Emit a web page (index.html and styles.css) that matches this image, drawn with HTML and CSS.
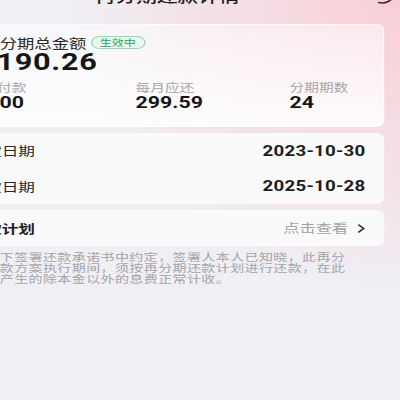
FILE: index.html
```html
<!DOCTYPE html>
<html lang="zh-CN">
<head>
<meta charset="utf-8">
<title>再分期详情</title>
<link rel="stylesheet" href="styles.css">
</head>
<body>
<div class="screen">
  <div class="header">
    <span class="title">再分期还款详情</span>
    <svg class="header-icon" width="12" height="14" viewBox="0 0 12 14"><path d="M1 12.5 Q7 14.2 10.5 9" fill="none" stroke="#333" stroke-width="1.5" stroke-linecap="round"/></svg>
  </div>

  <div class="card summary">
    <div class="summary-head">
      <span class="summary-label">再分期总金额</span>
      <span class="badge">生效中</span>
    </div>
    <div class="amount">7190.26</div>
    <div class="stats">
      <div class="stat">
        <div class="stat-label">首付款</div>
        <div class="stat-value">0.00</div>
      </div>
      <div class="stat">
        <div class="stat-label">每月应还</div>
        <div class="stat-value">299.59</div>
      </div>
      <div class="stat">
        <div class="stat-label">分期期数</div>
        <div class="stat-value">24</div>
      </div>
    </div>
  </div>

  <div class="card dates">
    <div class="row">
      <span class="row-label">还款日期</span>
      <span class="row-value">2023-10-30</span>
    </div>
    <div class="row">
      <span class="row-label">到款日期</span>
      <span class="row-value">2025-10-28</span>
    </div>
  </div>

  <div class="card plan">
    <span class="plan-label">还款计划</span>
    <span class="plan-link">点击查看
      <svg class="chev" width="6" height="9" viewBox="0 0 6 9"><path d="M1 1 L4.6 4.5 L1 8" fill="none" stroke="#333" stroke-width="1.5" stroke-linecap="round" stroke-linejoin="round"/></svg>
    </span>
  </div>

  <p class="notice">在以下签署还款承诺书中约定，签署人本人已知晓，此再分<br>期还款方案执行期间，须按再分期还款计划进行还款，在此<br>期间产生的除本金以外的息费正常计收。</p>
</div>
</body>
</html>
```

FILE: styles.css
```css
html, body {
  margin: 0;
  padding: 0;
}
body {
  width: 400px;
  height: 400px;
  overflow: hidden;
  font-family: "Noto Sans CJK SC", "Noto Sans", sans-serif;
  background:
    radial-gradient(ellipse 330px 290px at 400px 0px, rgba(250, 204, 212, 0.95), rgba(250, 204, 212, 0) 100%),
    #f0eff4;
}
.screen {
  width: 337px;
  margin-left: -49px;
  transform: scaleX(1.333);
  transform-origin: 0 0;
}
.header {
  height: 24px;
  margin-top: -17.5px;
  display: flex;
  align-items: flex-start;
}
.title {
  margin-left: 108px;
  font-size: 15.5px;
  line-height: 24px;
  font-weight: 500;
  color: #1c1c1c;
  white-space: nowrap;
}
.header-icon {
  margin-left: auto;
  margin-right: 5px;
  margin-top: 7.5px;
}
.card {
  margin: 0 12px;
  border-radius: 6px;
}
.summary {
  margin-top: 17.5px;
  padding: 11px 14px 14px 11.5px;
  background: linear-gradient(180deg, rgba(255, 255, 255, 0.5) 0%, rgba(255, 255, 255, 0.9) 100%);
  box-shadow: inset 0 0 0 1px rgba(255, 255, 255, 0.7);
}
.summary-head {
  display: flex;
  align-items: center;
  gap: 3px;
  height: 15px;
}
.summary-label {
  font-size: 13px;
  line-height: 15px;
  color: #2a2a2a;
  white-space: nowrap;
}
.badge {
  font-size: 9px;
  line-height: 9px;
  padding: 1px 6px;
  color: #2aa763;
  background: #e9f7ee;
  border: 1px solid #93d8b0;
  border-radius: 8px;
  white-space: nowrap;
}
.amount {
  margin: 1px 0 0 -3px;
  font-family: Roboto, "Liberation Sans", sans-serif;
  font-weight: 700;
  font-size: 23px;
  letter-spacing: 0.5px;
  line-height: 24px;
  color: #161616;
}
.stats {
  display: grid;
  grid-template-columns: 115px 115.5px 1fr;
  margin-top: 6px;
}
.stat-label {
  font-size: 11px;
  line-height: 12px;
  color: #a6a6a6;
  white-space: nowrap;
}
.stat-value {
  margin-left: -1px;
  font-family: Roboto, "Liberation Sans", sans-serif;
  font-weight: 700;
  font-size: 16px;
  line-height: 20px;
  color: #161616;
}
.stat + .stat .stat-value {
  margin-left: 0;
}
.dates {
  margin-top: 6px;
  padding: 0 14px 0 13px;
  background: #fafafb;
}
.row {
  height: 35.5px;
  display: flex;
  align-items: center;
  justify-content: space-between;
}
.row-label {
  font-size: 12.5px;
  color: #2a2a2a;
  white-space: nowrap;
  margin-left: -12px;
}
.row-value {
  font-family: Roboto, "Liberation Sans", sans-serif;
  font-weight: 700;
  font-size: 14px;
  letter-spacing: 0.2px;
  color: #1c1c1c;
}
.plan {
  margin-top: 6px;
  height: 36px;
  padding: 0 14px 0 1px;
  display: flex;
  align-items: center;
  justify-content: space-between;
  background: #fafafb;
}
.plan-label {
  font-size: 12.5px;
  font-weight: 600;
  color: #222;
  white-space: nowrap;
}
.plan-link {
  display: flex;
  align-items: center;
  gap: 7px;
  font-size: 12.2px;
  color: #a3a3a3;
  white-space: nowrap;
}
.chev {
  display: block;
}
.notice {
  margin: 4.5px 12px 0 15px;
  font-size: 10.5px;
  letter-spacing: 0.3px;
  line-height: 11.3px;
  color: #a4a4a9;
  white-space: nowrap;
}
```
